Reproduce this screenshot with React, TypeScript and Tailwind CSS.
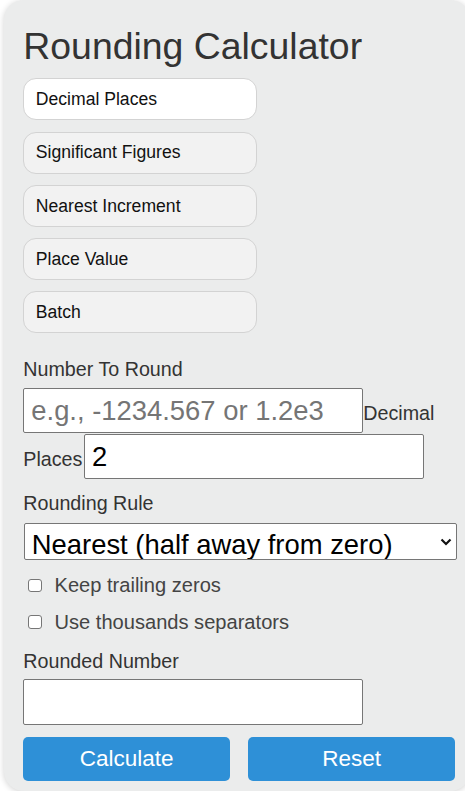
import React, { useState } from 'react';

const modes = ['Decimal Places', 'Significant Figures', 'Nearest Increment', 'Place Value', 'Batch'];

const labelCls = 'block text-[19.7px] leading-[22.4px] text-[#333]';
const inputCls =
  'inline-block align-baseline h-[45px] w-[340px] mb-px border border-[#767676] rounded-[2px] bg-white px-[7px] text-[27.4px] text-black outline-none placeholder:text-[#757575]';
const checkCls =
  'ml-[5px] mr-[12.8px] h-[13.4px] w-[13.4px] appearance-none rounded-[3px] border border-[#767676] bg-white checked:bg-[#2e90d7]';

const App: React.FC = () => {
  const [mode, setMode] = useState('Decimal Places');
  const [num, setNum] = useState('');
  const [places, setPlaces] = useState('2');
  const [rule, setRule] = useState('half-away');
  const [keepZeros, setKeepZeros] = useState(false);
  const [thousands, setThousands] = useState(false);
  const [result, setResult] = useState('');

  const calculate = () => {
    const n = Number(num);
    const p = parseInt(places, 10) || 0;
    if (!num || isNaN(n)) {
      setResult('');
      return;
    }
    const f = Math.pow(10, p);
    let r: number;
    if (rule === 'up') r = Math.ceil(n * f) / f;
    else if (rule === 'down') r = Math.floor(n * f) / f;
    else if (rule === 'truncate') r = Math.trunc(n * f) / f;
    else r = (Math.sign(n) * Math.round(Math.abs(n) * f)) / f;
    let out = keepZeros ? r.toFixed(p) : String(r);
    if (thousands) {
      const [i, d] = out.split('.');
      out = Number(i).toLocaleString('en-US') + (d ? '.' + d : '');
    }
    setResult(out);
  };

  const reset = () => {
    setNum('');
    setPlaces('2');
    setRule('half-away');
    setKeepZeros(false);
    setThousands(false);
    setResult('');
  };

  return (
    <div className="w-[465px] h-[791px] overflow-hidden bg-white font-['Liberation_Sans',Arial,sans-serif]">
      <div className="ml-[4px] w-[466px] rounded-[20px] bg-[#ebecec] pl-[19.3px] pr-[13.3px] pt-[25px] pb-[10px] shadow-[0_1px_6px_rgba(0,0,0,0.18)]">
        <h1 className="text-[37.4px] leading-[43px] font-normal text-[#333]">Rounding Calculator</h1>

        <div className="mt-[10.3px] flex flex-col gap-[11.3px]">
          {modes.map((m) => (
            <button
              key={m}
              onClick={() => setMode(m)}
              className={`h-[42px] w-[233.3px] rounded-[13px] border border-[#d3d3d3] pl-[11.5px] text-left text-[17.6px] text-[#111] ${
                mode === m ? 'bg-white' : 'bg-[#f2f2f2]'
              }`}
            >
              {m}
            </button>
          ))}
        </div>

        <label className={`${labelCls} mt-[24.7px]`}>Number To Round</label>
        <div className="mt-[7.9px] text-[19.7px] leading-[22.4px] text-[#333]">
          <input
            className={inputCls}
            placeholder="e.g., -1234.567 or 1.2e3"
            value={num}
            onChange={(e) => setNum(e.target.value)}
          />
          <span>Decimal Places</span>
          <input className={`${inputCls} ml-[1.5px]`} value={places} onChange={(e) => setPlaces(e.target.value)} />
        </div>

        <label className={`${labelCls} mt-[11.5px]`}>Rounding Rule</label>
        <div className="relative mt-[9.1px] ml-px w-[432.3px]">
          <select
            value={rule}
            onChange={(e) => setRule(e.target.value)}
            className="block h-[36.3px] w-full appearance-none rounded-[2px] border border-[#767676] bg-white pl-[6.5px] text-[27.4px] text-black outline-none"
          >
            <option value="half-away">Nearest (half away from zero)</option>
            <option value="half-even">Nearest (half to even)</option>
            <option value="up">Round up (ceiling)</option>
            <option value="down">Round down (floor)</option>
            <option value="truncate">Truncate</option>
          </select>
          <svg
            className="pointer-events-none absolute right-[5px] top-[15px]"
            width="12"
            height="8"
            viewBox="0 0 12 8"
            fill="none"
          >
            <path d="M1.5 1.5 L6 6 L10.5 1.5" stroke="#111" strokeWidth="2.2" />
          </svg>
        </div>

        <label className="mt-[14.5px] flex h-[22.4px] items-center text-[20.1px] text-[#444]">
          <input
            type="checkbox"
            checked={keepZeros}
            onChange={(e) => setKeepZeros(e.target.checked)}
            className={checkCls}
          />
          Keep trailing zeros
        </label>
        <label className="mt-[14.2px] flex h-[22.4px] items-center text-[20.1px] text-[#444]">
          <input
            type="checkbox"
            checked={thousands}
            onChange={(e) => setThousands(e.target.checked)}
            className={checkCls}
          />
          Use thousands separators
        </label>

        <label className={`${labelCls} mt-[16.6px]`}>Rounded Number</label>
        <input
          readOnly
          value={result}
          className="mt-[6.5px] block h-[46px] w-[340px] rounded-[2px] border border-[#767676] bg-white px-[7px] text-[27.4px] text-black outline-none"
        />

        <div className="mt-[12.7px] grid w-[431.7px] grid-cols-2 gap-[18.3px]">
          <button
            onClick={calculate}
            className="h-[43.7px] rounded-[5px] bg-[#2e90d7] text-[22.5px] text-white"
          >
            Calculate
          </button>
          <button onClick={reset} className="h-[43.7px] rounded-[5px] bg-[#2e90d7] text-[22.5px] text-white">
            Reset
          </button>
        </div>
      </div>
    </div>
  );
};

export default App;
